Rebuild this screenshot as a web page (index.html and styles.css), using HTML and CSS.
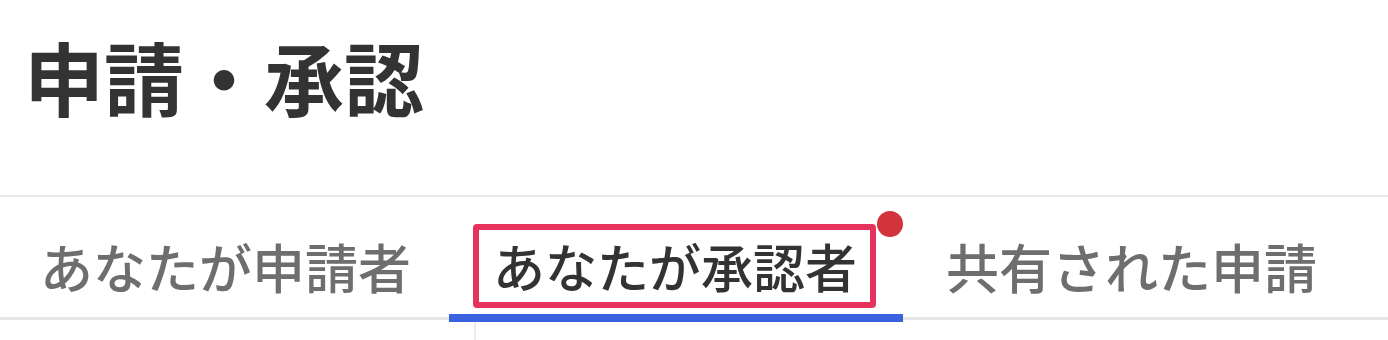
FILE: index.html
```html
<!DOCTYPE html>
<html lang="ja">
<head>
<meta charset="utf-8">
<title>申請・承認</title>
<link rel="stylesheet" href="styles.css">
</head>
<body>
<header class="page-head">
  <h1 class="page-title">申請・承認</h1>
</header>
<nav class="tabs">
  <div class="tab">
    <span class="tab-label">あなたが申請者</span>
  </div>
  <div class="tab tab-active">
    <span class="tab-label">あなたが承認者<span class="badge-dot"></span></span>
  </div>
  <div class="tab">
    <span class="tab-label">共有された申請</span>
  </div>
</nav>
<main class="content">
  <div class="content-col"></div>
</main>
</body>
</html>
```

FILE: styles.css
```css
html, body {
  margin: 0;
  padding: 0;
  background: #ffffff;
}

body {
  font-family: "Noto Sans CJK JP", "Noto Sans", sans-serif;
  color: #333333;
  overflow: hidden;
}

.page-head {
  padding: 35px 0 0 24px;
  height: 160px;
  border-bottom: 2px solid #e9e9e9;
}

.page-title {
  margin: 0;
  font-size: 80px;
  line-height: 80px;
  font-weight: 700;
  color: #333333;
}

.tabs {
  display: flex;
  padding-left: 16px;
  border-bottom: 3px solid #e6e6e6;
}

.tab {
  position: relative;
  padding: 27px 24px 9px 24px;
  margin-right: 15px;
}

.tab-active {
  padding-right: 27px;
  margin-right: 19px;
}

.tab-active::after {
  content: "";
  position: absolute;
  left: 0;
  right: 0;
  bottom: -5px;
  height: 8px;
  background: #3a62e1;
}

.tab-label {
  position: relative;
  display: block;
  font-size: 53px;
  line-height: 72px;
  color: #6e6e6e;
  font-weight: 500;
  border: 6px solid transparent;
  border-radius: 4px;
  padding: 0 13px 0 14px;
  margin: 0 -20px 0 -20px;
  white-space: nowrap;
}

.tab-active .tab-label {
  font-size: 52px;
  color: #333333;
  border-color: #e6335d;
  margin: 0;
}

.badge-dot {
  position: absolute;
  top: -19px;
  right: -33px;
  width: 26px;
  height: 26px;
  border-radius: 50%;
  background: #d1343a;
}

.content {
  padding-left: 474px;
}

.content-col {
  width: 0;
  height: 20px;
  border-left: 2px solid #ececec;
}
```
